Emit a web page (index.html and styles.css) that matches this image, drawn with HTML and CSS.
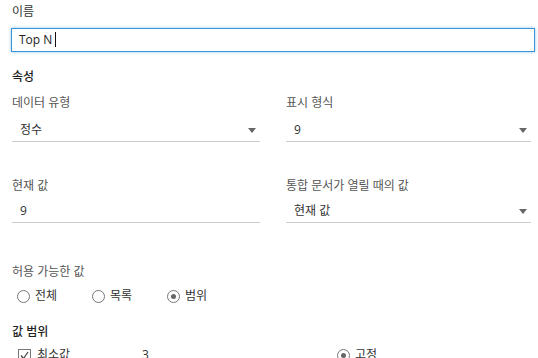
FILE: index.html
```html
<!DOCTYPE html>
<html>
<head>
    <title>Parameter</title>
    <link rel="stylesheet" href="styles.css">
</head>
<body>
    <div class="panel">
        <div class="label">이름</div>
        <div class="name-input">Top N<span class="caret"></span></div>

        <div class="section-title">속성</div>

        <div class="fields">
            <div class="field">
                <div class="field-label">데이터 유형</div>
                <div class="value select">정수<span class="arrow"></span></div>
            </div>
            <div class="field">
                <div class="field-label">표시 형식</div>
                <div class="value select">9<span class="arrow"></span></div>
            </div>
            <div class="field">
                <div class="field-label">현재 값</div>
                <div class="value">9</div>
            </div>
            <div class="field">
                <div class="field-label">통합 문서가 열릴 때의 값</div>
                <div class="value select">현재 값<span class="arrow"></span></div>
            </div>
        </div>

        <div class="field-label allowed">허용 가능한 값</div>
        <div class="radios">
            <div class="radio"><span class="circle"></span>전체</div>
            <div class="radio"><span class="circle"></span>목록</div>
            <div class="radio"><span class="circle checked"></span>범위</div>
        </div>

        <div class="section-title range-title">값 범위</div>
        <div class="range-row">
            <div class="check"><span class="box">
                <svg width="11" height="11" viewBox="0 0 11 11"><path d="M2 5.5 L4.5 8.5 L9 2" fill="none" stroke="#444" stroke-width="1.2"/></svg>
            </span>최소값</div>
            <div class="min-value">3</div>
            <div class="radio fixed"><span class="circle checked"></span>고정</div>
        </div>
    </div>
</body>
</html>
```

FILE: styles.css
```css
body {
    margin: 0;
    background-color: white;
    font-family: "Open Sans", "Noto Sans CJK KR", sans-serif;
    font-size: 12px;
    line-height: 16px;
    color: #333;
    overflow: hidden;
}

.panel {
    padding: 4px 0 0 12px;
}

.label {
    color: #333;
}

.name-input {
    box-sizing: border-box;
    width: 524px;
    height: 24px;
    margin: 8px 0 0 -1px;
    padding: 3px 7px;
    border: 1px solid #3a93d8;
    box-shadow: 0 0 3px rgba(58, 147, 216, 0.55);
    color: #222;
    font-size: 12px;
}

.caret {
    display: inline-block;
    width: 1px;
    height: 15px;
    margin-left: 3px;
    background-color: #111;
    vertical-align: -3px;
}

.section-title {
    margin-top: 17px;
    color: #222;
    font-weight: 500;
}

.fields {
    display: grid;
    grid-template-columns: 248px 245px;
    column-gap: 26px;
    row-gap: 36px;
    margin-top: 10px;
}

.field-label {
    color: #555;
}

.value {
    position: relative;
    margin-top: 11px;
    padding: 0 0 3px 8px;
    border-bottom: 1px solid #ccc;
    color: #333;
}

.field:nth-child(n+3) .value {
    margin-top: 9px;
}

.arrow {
    position: absolute;
    right: 4px;
    top: 6px;
    border-left: 4px solid transparent;
    border-right: 4px solid transparent;
    border-top: 5px solid #666;
}

.allowed {
    margin-top: 41px;
}

.radios {
    display: flex;
    margin-top: 8px;
    padding-left: 5px;
}

.radio {
    display: flex;
    align-items: center;
    width: 75px;
    color: #333;
}

.circle {
    box-sizing: border-box;
    width: 13px;
    height: 13px;
    margin-right: 5px;
    border: 1px solid #777;
    border-radius: 50%;
    position: relative;
}

.circle.checked::after {
    content: "";
    position: absolute;
    left: 3px;
    top: 3px;
    width: 5px;
    height: 5px;
    border-radius: 50%;
    background-color: #666;
}

.range-title {
    margin-top: 20px;
}

.range-row {
    display: flex;
    align-items: center;
    margin-top: 7px;
    padding-left: 6px;
}

.check {
    display: flex;
    align-items: center;
    width: 124px;
}

.box {
    box-sizing: border-box;
    width: 13px;
    height: 13px;
    margin-right: 6px;
    border: 1px solid #777;
    display: flex;
}

.min-value {
    width: 195px;
}

.fixed {
    width: auto;
}
```
